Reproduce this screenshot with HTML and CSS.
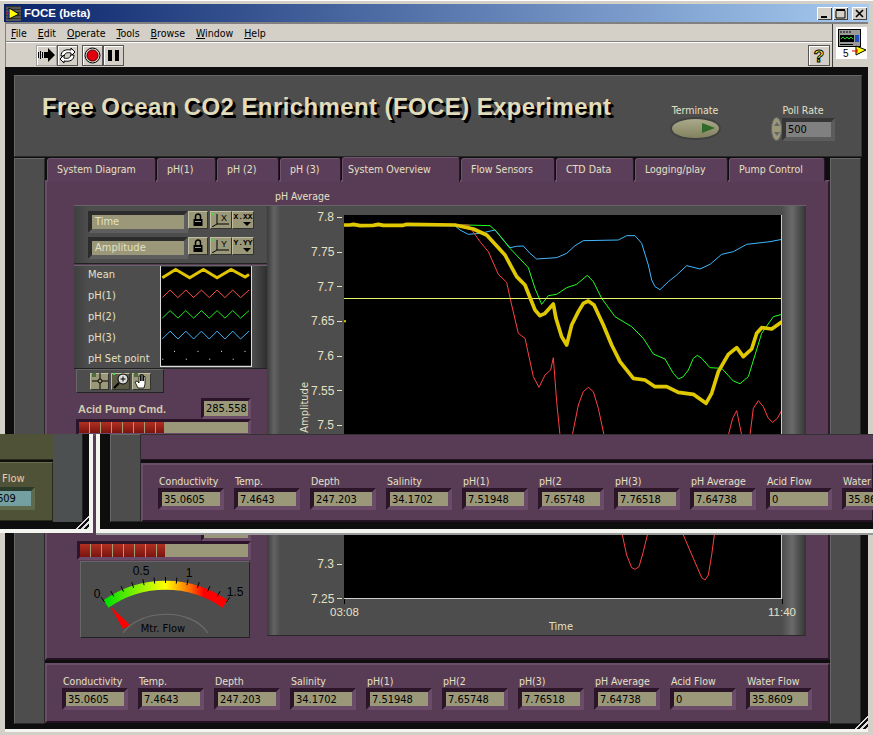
FILE: index.html
```html
<!DOCTYPE html>
<html lang="en">
<head>
  <meta charset="UTF-8">
  <title>FOCE (beta)</title>
  <link rel="stylesheet" href="styles.css">
</head>
<body>
  <div class="window">
    <div class="titlebar">
      <svg class="title-icon" width="15" height="15" viewBox="0 0 15 15">
        <rect width="15" height="15" fill="#333"/>
        <path d="M0 2h15M0 5h15M0 8h15M0 11h15M0 14h15" stroke="#777" stroke-width="1"/>
        <path d="M3 2 L13 8 L3 13 Z" fill="#ffff00" stroke="#000"/>
        <path d="M0 7h4" stroke="#e00000"/>
        <path d="M2 3v9" stroke="#2040e0"/>
      </svg>
      <span class="title-text">FOCE (beta)</span>
      <div class="title-buttons">
        <div class="title-btn"><svg width="15" height="13"><rect x="4" y="9" width="6" height="2" fill="#000"/></svg></div>
        <div class="title-btn"><svg width="15" height="13"><path d="M3 3.5h9v7.5h-9zM3 2.5h9" fill="none" stroke="#000"/></svg></div>
        <div class="title-btn close"><svg width="15" height="13"><path d="M4 3l7 7M11 3l-7 7" stroke="#000" stroke-width="1.6"/></svg></div>
      </div>
    </div>

    <div class="chrome">
      <div class="chrome-left">
        <nav class="menubar">
          <span><u>F</u>ile</span>
          <span><u>E</u>dit</span>
          <span><u>O</u>perate</span>
          <span><u>T</u>ools</span>
          <span><u>B</u>rowse</span>
          <span><u>W</u>indow</span>
          <span><u>H</u>elp</span>
        </nav>
        <div class="toolbar">
          <div class="tool-btn flat">
            <svg width="17" height="14" viewBox="0 0 17 14"><path d="M6 4h4V0l7 7-7 7v-4H6z" fill="#000"/><path d="M0.500 4v6M2.500 3v8M4.500 4v6" stroke="#000"/></svg>
          </div>
          <div class="tool-btn">
            <svg width="19" height="17" viewBox="0 0 19 17"><path d="M3 9C3 4 7 2 13 3V1l4 4-4 4V6C9 5 7 6 6 9z" fill="#fff" stroke="#000"/><path d="M16 8c0 5-4 7-10 6v2l-4-4 4-4v3c4 1 6 0 7-3z" fill="#fff" stroke="#000"/></svg>
          </div>
          <div class="tool-btn stop">
            <svg width="17" height="17" viewBox="0 0 17 17"><circle cx="8.5" cy="8.5" r="7.5" fill="#d8d4cc" stroke="#000"/><circle cx="8.5" cy="8.5" r="5.5" fill="#e00010" stroke="#400"/></svg>
          </div>
          <div class="tool-btn">
            <svg width="13" height="13" viewBox="0 0 13 13"><path d="M1 1h4v11H1zM8 1h4v11H8z" fill="#000"/></svg>
          </div>
          <div class="tool-btn help">
            <svg width="18" height="19" viewBox="0 0 18 19"><text x="9" y="16" text-anchor="middle" class="help-mark">?</text></svg>
          </div>
        </div>
      </div>
      <div class="vi-icon">
        <svg width="31" height="32" viewBox="0 0 31 32">
          <rect width="31" height="32" fill="#fff"/>
          <rect x="2.500" y="2.500" width="22" height="17" fill="#9a9a9a" stroke="#000"/>
          <rect x="4" y="8" width="14" height="7" fill="#000"/>
          <path d="M5 12l2-2 2 2 2-2 2 2 2-2 2 2" stroke="#20e020" fill="none"/>
          <path d="M4 5h2M7 5h2M10 5h2M13 5h2M4 17.500h13" stroke="#000"/>
          <rect x="19" y="8" width="4" height="7" fill="#2050c0"/>
          <path d="M20 19L30 23L20 28Z" fill="#ffff00" stroke="#000"/>
          <path d="M16 24h5M21 22v4" stroke="#e00000"/>
          <text x="7" y="30" class="vi-number">5</text>
        </svg>
      </div>
    </div>

    <div class="body">
      <header class="top-panel">
        <h1>Free Ocean CO2 Enrichment (FOCE) Experiment</h1>
        <div class="terminate">
          <span>Terminate</span>
          <div class="oval"><i></i></div>
        </div>
        <div class="poll">
          <span>Poll Rate</span>
          <div class="poll-row">
            <div class="spinner"></div>
            <div class="poll-value">500</div>
          </div>
        </div>
      </header>

      <div class="main-row">
        <div class="side-pane"></div>
        <div class="center">
          <div class="tabs">
            <div class="tab">System Diagram</div>
            <div class="tab">pH(1)</div>
            <div class="tab">pH (2)</div>
            <div class="tab">pH (3)</div>
            <div class="tab active">System Overview</div>
            <div class="tab">Flow Sensors</div>
            <div class="tab">CTD Data</div>
            <div class="tab">Logging/play</div>
            <div class="tab">Pump Control</div>
          </div>

          <section class="tab-panel">
            <div class="left-col">
              <div class="scale-legend">
                <div class="scale-row">
                  <div class="scale-name">Time</div>
                  <div class="mini-btn"><svg width="10" height="13" viewBox="0 0 10 13"><path d="M2.5 6V3.5a2.5 2.5 0 0 1 5 0V6" fill="none" stroke="#000" stroke-width="1.5"/><rect x="0.5" y="6" width="9" height="7" fill="#000"/><rect x="2" y="8" width="6" height="1" fill="#999"/></svg></div>
                  <div class="mini-btn wide"><svg width="18" height="14" viewBox="0 0 18 14"><path d="M5 1v10H17M5 11L0 14" stroke="#000" fill="none"/><text x="9" y="8" class="axis-letter">X</text><rect x="0" y="0" width="2" height="2" fill="#40e040"/></svg></div>
                  <div class="mini-btn wide fmt">X.XX</div>
                </div>
                <div class="scale-row">
                  <div class="scale-name">Amplitude</div>
                  <div class="mini-btn"><svg width="10" height="13" viewBox="0 0 10 13"><path d="M2.5 6V3.5a2.5 2.5 0 0 1 5 0V6" fill="none" stroke="#000" stroke-width="1.5"/><rect x="0.5" y="6" width="9" height="7" fill="#000"/><rect x="2" y="8" width="6" height="1" fill="#999"/></svg></div>
                  <div class="mini-btn wide"><svg width="18" height="14" viewBox="0 0 18 14"><path d="M5 1v10H17M5 11L0 14" stroke="#000" fill="none"/><text x="9" y="8" class="axis-letter">Y</text><rect x="0" y="0" width="2" height="2" fill="#40e040"/></svg></div>
                  <div class="mini-btn wide fmt">Y.YY</div>
                </div>
              </div>

              <div class="plot-legend">
                <ul class="plot-names">
                  <li>Mean</li>
                  <li>pH(1)</li>
                  <li>pH(2)</li>
                  <li>pH(3)</li>
                  <li>pH Set point</li>
                </ul>
                <svg class="plot-swatch" width="92" height="101" viewBox="0 0 276 303">
                  <rect width="276" height="303" fill="#000"/>
                  <path d="M4 34L45 9 88 34 130 9 172 34 215 9 258 32 270 24" fill="none" stroke="#e0c400" stroke-width="9"/>
                  <path d="M4 95L28 72 52 95 76 72 100 95 124 72 148 95 172 72 196 95 220 72 244 95 270 72" fill="none" stroke="#ff5050" stroke-width="3"/>
                  <path d="M4 158L28 135 52 158 76 135 100 158 124 135 148 158 172 135 196 158 220 135 244 158 270 135" fill="none" stroke="#20f020" stroke-width="3"/>
                  <path d="M4 222L28 198 52 222 76 198 100 222 124 198 148 222 172 198 196 222 220 198 244 222 270 198" fill="none" stroke="#40b8ff" stroke-width="3"/>
                  <path d="M40 260h3M112 260h3M184 260h3M256 260h3M4 284h3M76 284h3M148 284h3M220 284h3" stroke="#fff" stroke-width="3"/>
                </svg>
              </div>

              <div class="palette">
                <div class="mini-btn tool"><svg width="16" height="16" viewBox="0 0 16 16"><rect width="4" height="4" fill="#4f6f3f"/><path d="M8 0v6M8 10v6M0 8h6M10 8h6" stroke="#000"/><circle cx="8" cy="8" r="2" fill="none" stroke="#000"/></svg></div>
                <div class="mini-btn tool dark"><svg width="16" height="16" viewBox="0 0 16 16"><rect width="2" height="2" fill="#40e040"/><circle cx="10" cy="6" r="5" fill="#ddd" stroke="#000"/><path d="M7.5 6h5M10 3.5v5" stroke="#000"/><path d="M6 10L1 15" stroke="#000" stroke-width="2"/></svg></div>
                <div class="mini-btn tool"><svg width="16" height="16" viewBox="0 0 16 16"><rect width="4" height="4" fill="#4f6f3f"/><path d="M4 15L1 9l2-1 2 2V3h1.5v5V1.500h1.500v6.500V2h1.500v6V3.500h1.500V11l-1 4z" fill="#fff" stroke="#000" stroke-width="0.8"/></svg></div>
              </div>

              <div class="acid-head">
                <span class="acid-label">Acid Pump Cmd.</span>
                <div class="acid-value">285.558</div>
              </div>
              <div class="slider"><div class="slider-fill"></div></div>

              <div class="acid-head repeat"><div class="acid-value"></div></div>
              <div class="slider lower"><div class="slider-fill"></div></div>

              <div class="gauge">
                <svg width="170" height="77" viewBox="0 0 170 77">
                  <defs>
                    <linearGradient id="gaugeGrad" x1="0" x2="1" y1="0" y2="0">
                      <stop offset="0" stop-color="#00e000"/>
                      <stop offset="0.25" stop-color="#80f000"/>
                      <stop offset="0.5" stop-color="#ffff00"/>
                      <stop offset="0.72" stop-color="#ff6000"/>
                      <stop offset="0.82" stop-color="#ff0000"/>
                      <stop offset="1" stop-color="#ff0000"/>
                    </linearGradient>
                  </defs>
                  <path d="M26 43A104 104 0 0 1 145 43" fill="none" stroke="url(#gaugeGrad)" stroke-width="9"/>
                  <path class="gauge-ticks" d="M24.700 41.200L21.300 36.300M33.800 35.400L30.900 30.200M43.500 30.700L41.100 25.200M53.600 26.900L51.800 21.200M64.100 24.200L62.900 18.300M74.700 22.600L74.100 16.600M85.500 22V16M96.300 22.600L96.900 16.600M106.900 24.200L108.100 18.300M117.400 26.900L119.200 21.200M127.500 30.700L129.900 25.200M137.200 35.400L140.100 30.200M146.300 41.200L149.700 36.300"/>
                  <path d="M30 45L50 64 43 68Z" fill="#ff0000"/>
                  <path d="M43 72C60 48 110 46 128 72" fill="none" stroke="#6c6c6c" stroke-width="1.200"/>
                  <text x="17" y="37" class="gauge-num">0</text>
                  <text x="61" y="14" class="gauge-num">0.5</text>
                  <text x="109" y="16" class="gauge-num">1</text>
                  <text x="155" y="35" class="gauge-num">1.5</text>
                  <text x="83" y="71" class="gauge-name">Mtr. Flow</text>
                </svg>
              </div>
            </div>

            <div class="right-col">
              <div class="chart-title">pH Average</div>
              <div class="chart">
                <div class="chart-row">
                  <div class="axis-title"><span>Amplitude</span></div>
                  <div class="y-scale">
                    <div>7.8</div><div>7.75</div><div>7.7</div><div>7.65</div>
                    <div>7.6</div><div>7.55</div><div>7.5</div><div>7.45</div>
                    <div>7.4</div><div>7.35</div><div>7.3</div><div>7.25</div>
                  </div>
                  <div class="plot">
                    <svg width="438" height="384" viewBox="12 30 1314 1152">
                      <path class="trace" stroke="#40b8ff" d="M12 62L345 62 360 75 385 88 420 85 465 75 490 105 510 128 530 124 550 123 570 145 590 162 650 158 680 145 705 122 730 107 835 105 860 92 885 92 905 115 925 180 935 225 945 245 960 254 985 230 1010 210 1040 182 1080 192 1110 178 1145 148 1180 140 1220 118 1290 110 1326 103"/>
                      <path class="trace" stroke="#20ff20" d="M12 60L380 60 450 62 470 80 510 130 565 188 585 250 605 298 625 272 650 268 680 248 710 238 742 211 760 230 785 280 825 335 875 365 910 400 940 447 975 462 1000 505 1015 522 1030 515 1045 495 1060 460 1072 451 1085 460 1110 488 1145 490 1180 528 1200 536 1225 515 1245 450 1265 385 1300 335 1326 328"/>
                      <path class="trace" stroke="#ff4040" d="M12 60L385 60 420 110 445 140 475 208 500 232 515 300 535 385 555 400 580 515 597 547 615 510 632 495 640 458 650 590 660 690 670 780 685 780 697 690 715 600 730 560 745 547 760 560 775 610 792 690 847 990 860 1050 875 1088 885 1093 897 1085 910 1040 922 990 975 800 1030 990 1060 1060 1085 1118 1095 1125 1105 1110 1115 1050 1123 990 1165 690 1178 640 1190 617 1205 690 1218 740 1230 690 1240 610 1255 587 1270 605 1285 640 1298 652 1312 640 1326 615"/>
                      <path class="setpoint" d="M12 280.500H1326"/>
                      <path class="trace mean" d="M12 60L30 60 40 58 60 62 100 61 115 58 130 61 190 61 200 58 345 60 400 72 440 90 495 150 530 215 555 240 585 315 600 332 615 325 640 297 648 340 665 395 680 420 695 360 715 320 730 295 745 288 762 300 790 360 815 420 840 470 880 520 915 525 945 545 980 545 1015 562 1060 568 1098 595 1115 565 1135 500 1165 448 1190 428 1210 455 1235 432 1250 385 1265 368 1295 372 1326 350"/>
                      <path class="marker" d="M12 348.500h6"/>
                    </svg>
                  </div>
                </div>
                <div class="x-scale"><span>03:08</span><span>11:40</span></div>
                <div class="x-title">Time</div>
              </div>
            </div>
          </section>

          <section class="readouts">
            <div class="readout"><label>Conductivity</label><div class="readout-value">35.0605</div></div>
            <div class="readout"><label>Temp.</label><div class="readout-value">7.4643</div></div>
            <div class="readout"><label>Depth</label><div class="readout-value">247.203</div></div>
            <div class="readout"><label>Salinity</label><div class="readout-value">34.1702</div></div>
            <div class="readout"><label>pH(1)</label><div class="readout-value">7.51948</div></div>
            <div class="readout"><label>pH(2</label><div class="readout-value">7.65748</div></div>
            <div class="readout"><label>pH(3)</label><div class="readout-value">7.76518</div></div>
            <div class="readout"><label>pH Average</label><div class="readout-value">7.64738</div></div>
            <div class="readout"><label>Acid Flow</label><div class="readout-value">0</div></div>
            <div class="readout"><label>Water Flow</label><div class="readout-value">35.8609</div></div>
          </section>
        </div>
        <div class="side-pane"></div>
      </div>
      <div class="grip"></div>
    </div>
  </div>

  <!-- second and third window lying over the first one -->
  <div class="overlap">
    <div class="back-window">
      <div class="back-main">
        <div class="back-top"></div>
        <div class="back-strip">
          <span class="back-label">Flow</span>
          <div class="back-value">609</div>
        </div>
      </div>
      <div class="back-side"></div>
      <div class="grip small"></div>
    </div>
    <div class="front-window">
      <div class="side-pane front-side"></div>
      <div class="front-main">
        <div class="front-top"></div>
        <section class="readouts front-readouts">
          <div class="readout"><label>Conductivity</label><div class="readout-value">35.0605</div></div>
          <div class="readout"><label>Temp.</label><div class="readout-value">7.4643</div></div>
          <div class="readout"><label>Depth</label><div class="readout-value">247.203</div></div>
          <div class="readout"><label>Salinity</label><div class="readout-value">34.1702</div></div>
          <div class="readout"><label>pH(1)</label><div class="readout-value">7.51948</div></div>
          <div class="readout"><label>pH(2</label><div class="readout-value">7.65748</div></div>
          <div class="readout"><label>pH(3)</label><div class="readout-value">7.76518</div></div>
          <div class="readout"><label>pH Average</label><div class="readout-value">7.64738</div></div>
          <div class="readout"><label>Acid Flow</label><div class="readout-value">0</div></div>
          <div class="readout"><label>Water Flow</label><div class="readout-value">35.8609</div></div>
        </section>
      </div>
    </div>
  </div>
</body>
</html>
```

FILE: styles.css
```css
* {
  box-sizing: border-box;
}
body {
  margin: 0;
  width: 873px;
  height: 735px;
  overflow: hidden;
  position: relative;
  background: #d4d0c8;
  font-family: "DejaVu Sans Condensed", "DejaVu Sans", sans-serif;
  font-stretch: condensed;
  font-size: 10.500px;
  color: #e4e0c4;
}
.window {
  padding: 4px 4px 0 4px;
  height: 735px;
  border-top: 1px solid #fff;
  display: flex;
  flex-direction: column;
}
.titlebar {
  height: 18px;
  margin-top: -1px;
  display: flex;
  align-items: center;
  padding: 0 2px 0 2px;
  background: linear-gradient(to right, #0a246a, #a6caf0);
  flex: none;
}
.title-icon {
  margin-right: 3px;
}
.title-text {
  color: #fff;
  font-family: "Liberation Sans", sans-serif;
  font-weight: bold;
  font-size: 11.500px;
}
.title-buttons {
  margin-left: auto;
  display: flex;
  gap: 1px;
}
.title-btn {
  width: 15px;
  height: 13px;
  background: #d4d0c8;
  box-shadow: inset 1px 1px 0 #fff, inset -1px -1px 0 #404040;
}
.title-btn svg {
  display: block;
}
.title-btn.close {
  margin-left: 3px;
}
.chrome {
  height: 45px;
  margin-left: 1px;
  margin-right: 1px;
  display: flex;
  flex: none;
  background: #d4d0c8;
  border-top: 2px solid #808080;
  border-left: 1px solid #808080;
}
.chrome-left {
  flex: 1;
  display: flex;
  flex-direction: column;
}
.menubar {
  height: 18px;
  display: flex;
  align-items: center;
  gap: 11px;
  padding-left: 5px;
  color: #000;
  border-bottom: 1px solid #808080;
}
.toolbar {
  flex: 1;
  border-top: 1px solid #fff;
  display: flex;
  align-items: center;
  padding-left: 30px;
  gap: 0;
}
.tool-btn {
  width: 21px;
  height: 21px;
  display: flex;
  align-items: center;
  justify-content: center;
  background: #d4d0c8;
  border: 1px solid #555;
  box-shadow: inset 1px 1px 0 #fff;
}
.tool-btn.flat {
  border-color: #a0a0a0;
}
.tool-btn.stop {
  margin-left: 4px;
}
.tool-btn.help {
  margin-left: auto;
  margin-right: 2px;
  width: 22px;
}
.help-mark {
  font-size: 17px;
  font-weight: bold;
  font-family: "Liberation Sans", sans-serif;
  fill: #ffff40;
  stroke: #000;
  stroke-width: 1;
}
.vi-icon {
  width: 36px;
  border-left: 1px solid #404040;
  padding: 3px 0 0 3px;
}
.vi-icon svg {
  display: block;
}
.vi-number {
  font-size: 10px;
  font-family: "Liberation Sans", sans-serif;
  fill: #000;
}
.body {
  flex: 1;
  position: relative;
  margin-left: 1px;
  margin-right: 1px;
  margin-bottom: 3px;
  padding: 8px 6px 0 9px;
  background: #0e0e0e;
  border-bottom: 3px solid #f4f4f0;
}
.top-panel {
  height: 82px;
  display: flex;
  align-items: flex-start;
  padding: 17px 0 0 27px;
  background: #4d4d4d;
  border: 1px solid;
  border-color: #666 #333 #2a2a2a #666;
}
.top-panel h1 {
  margin: 0;
  width: 613px;
  flex: none;
  font-family: "Liberation Sans", sans-serif;
  font-stretch: normal;
  font-size: 24px;
  line-height: 28px;
  letter-spacing: 0.400px;
  white-space: nowrap;
  font-weight: bold;
  color: #e0dcbc;
  text-shadow: 2px 2px 0 #000, 3px 3px 0 #000;
}
.terminate {
  width: 80px;
  flex: none;
  display: flex;
  flex-direction: column;
  align-items: center;
  margin-top: 11px;
}
.oval {
  margin-top: 3px;
  width: 47px;
  height: 19px;
  border-radius: 50%;
  background: linear-gradient(#aaa98a, #82825f);
  box-shadow: 0 0 0 2px #414141;
  position: relative;
}
.oval i {
  position: absolute;
  left: 30px;
  top: 4px;
  border-left: 13px solid #306a28;
  border-top: 5px solid transparent;
  border-bottom: 5px solid transparent;
}
.poll {
  margin-left: 36px;
  width: 64px;
  flex: none;
  display: flex;
  flex-direction: column;
  align-items: center;
  margin-top: 11px;
}
.poll-row {
  display: flex;
  align-items: center;
  margin-top: 1px;
}
.spinner {
  width: 11px;
  height: 24px;
  border-radius: 50%;
  background: #9a9878;
  border: 1px solid #666;
  position: relative;
}
.spinner::before {
  content: "";
  position: absolute;
  left: 2px;
  top: 4px;
  border-left: 3px solid transparent;
  border-right: 3px solid transparent;
  border-bottom: 4px solid #666;
}
.spinner::after {
  content: "";
  position: absolute;
  left: 2px;
  bottom: 4px;
  border-left: 3px solid transparent;
  border-right: 3px solid transparent;
  border-top: 4px solid #666;
}
.poll-value {
  width: 53px;
  height: 23px;
  padding-left: 2px;
  line-height: 15px;
  font-size: 11px;
  color: #000;
  background: #808080;
  border: 4px solid;
  border-color: #363636 #5c5c5c #5c5c5c #363636;
}
.main-row {
  display: flex;
  height: 566px;
  margin-top: 1px;
}
.side-pane {
  width: 31px;
  background: #4d4d4d;
  border: 1px solid;
  border-color: #666 #2a2a2a #2a2a2a #666;
  flex: none;
}
.center {
  width: 785px;
  flex: none;
}
.tabs {
  height: 22px;
  padding-left: 2px;
  display: grid;
  grid-template-columns: 110px 60px 63px 62px 119px 95px 79px 94px 97px;
}
.tab {
  margin-right: 1px;
  padding: 4px 0 0 9px;
  line-height: 13px;
  background: #5b3e59;
  border: 1px solid;
  border-color: #6f546c #2a1628 transparent #6f546c;
  border-radius: 3px 3px 0 0;
  white-space: nowrap;
}
.tab.active {
  height: 25px;
  margin-top: -1px;
  padding-left: 5px;
  padding-top: 5px;
  background: #583b55;
  border-bottom: none;
  position: relative;
  z-index: 1;
}
.tab-panel {
  height: 480px;
  display: flex;
  padding: 7px 0 0 27px;
  background: #583b55;
  border: 2px solid;
  border-color: #6a4e67 #2f1a2d #241223 #6a4e67;
}
.left-col {
  width: 193px;
  margin-top: 16px;
  flex: none;
}
.scale-legend {
  height: 59px;
  background: linear-gradient(to right, #3f3f3f, #4d4d4d 14px);
  border-top: 1px solid #666;
  border-bottom: 1px solid #222;
  padding: 3px 0 0 14px;
}
.scale-row {
  display: flex;
  align-items: center;
  height: 26px;
}
.scale-name {
  width: 100px;
  height: 22px;
  padding: 0 0 0 3px;
  line-height: 14px;
  background: #9a9878;
  border: 4px solid;
  border-color: #2c2c2c #5e5e5e #5e5e5e #2c2c2c;
  font-size: 11px;
}
.mini-btn {
  width: 20px;
  height: 18px;
  display: flex;
  align-items: center;
  justify-content: center;
  background: #9a9878;
  border: 1px solid;
  border-color: #c0bea0 #333 #333 #c0bea0;
}
.scale-row .mini-btn {
  margin-top: -5px;
}
.mini-btn.wide {
  width: 22px;
}
.mini-btn.wide:nth-child(3) {
  margin-left: 2px;
}
.fmt {
  font-family: "Liberation Mono", monospace;
  font-stretch: normal;
  font-size: 8px;
  font-weight: bold;
  color: #000;
  overflow: hidden;
  white-space: nowrap;
  align-items: flex-start;
  position: relative;
}
.fmt::after {
  content: "";
  position: absolute;
  right: 2px;
  bottom: 2px;
  border-left: 4px solid transparent;
  border-right: 4px solid transparent;
  border-top: 4px solid #000;
}
.axis-letter {
  font-size: 9px;
  font-family: "Liberation Sans", sans-serif;
  fill: #000;
}
.plot-legend {
  height: 104px;
  margin-top: 1px;
  display: flex;
  border-top: 1px solid #666;
  border-bottom: 1px solid #222;
  padding-left: 14px;
  background: linear-gradient(to right, #3f3f3f, #4d4d4d 14px, #4d4d4d 178px, #2f2f2f);
}
.plot-names {
  list-style: none;
  margin: 0;
  padding: 0;
  width: 72px;
  font-size: 11px;
}
.plot-names li {
  height: 21px;
  line-height: 17px;
}
.plot-swatch {
  display: block;
  border-left: 1px solid #ddd;
  border-right: 1px solid #ddd;
  border-bottom: 1px solid #ddd;
}
.palette {
  width: 88px;
  height: 24px;
  margin-left: 2px;
  display: flex;
  align-items: center;
  padding-left: 13px;
  gap: 2px;
  background: #4d4d4d;
  border: 1px solid;
  border-color: #666 #222 #222 #666;
}
.mini-btn.tool {
  width: 19px;
  height: 17px;
}
.mini-btn.tool.dark {
  background: #5c5c44;
}
.acid-head {
  display: flex;
  align-items: center;
  justify-content: space-between;
  margin-top: 5px;
  height: 21px;
  width: 177px;
  padding-left: 4px;
}
.acid-head.repeat {
  margin-top: 84px;
  justify-content: flex-end;
}
.acid-label {
  font-family: "Liberation Sans", sans-serif;
  font-stretch: normal;
  font-weight: bold;
  font-size: 11px;
  color: #cfcbb0;
}
.acid-value {
  width: 50px;
  height: 21px;
  padding-left: 2px;
  line-height: 15px;
  color: #000;
  font-size: 11px;
  background: #9a9878;
  border: 3px solid;
  border-color: #2c1429 #6a4c68 #6a4c68 #2c1429;
}
.slider {
  width: 175px;
  height: 17px;
  margin-left: 2px;
  background: #9a9878;
  border: 3px solid;
  border-color: #2c1429 #6a4c68 #6a4c68 #2c1429;
}
.slider.lower {
  margin-left: 3px;
  width: 174px;
  height: 19px;
}
.slider-fill {
  width: 85px;
  height: 100%;
  background:
    repeating-linear-gradient(to right, transparent 0, transparent 10px, #a89c78 10px, #a89c78 11px),
    linear-gradient(#b03020, #7a1410);
}
.gauge {
  width: 170px;
  height: 77px;
  margin: 1px 0 0 6px;
  background: #4d4d4d;
  border: 1px solid;
  border-color: #666 #222 #222 #666;
  overflow: hidden;
}
.gauge svg {
  display: block;
  margin: -1px 0 0 -1px;
}
.gauge-ticks {
  stroke: #000;
  fill: none;
}
.gauge-num {
  font-size: 12px;
  text-anchor: middle;
  font-family: "Liberation Sans", sans-serif;
  fill: #000;
}
.gauge-name {
  font-size: 11px;
  text-anchor: middle;
  fill: #000;
}
.right-col {
  flex: none;
  width: 539px;
}
.chart-title {
  height: 16px;
  line-height: 14px;
  padding-left: 8px;
}
.chart {
  height: 431px;
  padding: 9px 0 0 30px;
  background: linear-gradient(to right, #3c3c3c, #636363 7px, #4d4d4d 13px, #4d4d4d 515px, #6a6a6a 525px, #333 539px);
  border-top: 1px solid #666;
  border-bottom: 1px solid #2a2a2a;
}
.chart-row {
  display: flex;
  height: 384px;
}
.axis-title {
  width: 14px;
  display: flex;
  align-items: center;
  justify-content: center;
  font-size: 11px;
}
.axis-title span {
  writing-mode: vertical-rl;
  transform: rotate(180deg);
}
.y-scale {
  width: 33px;
  margin-top: -15px;
  font-family: "Liberation Sans", sans-serif;
  font-stretch: normal;
  font-size: 12px;
}
.y-scale div {
  height: 34.700px;
  display: flex;
  align-items: center;
  justify-content: flex-end;
  gap: 3px;
  padding-right: 2px;
}
.y-scale div::after {
  content: "";
  width: 5px;
  height: 1px;
  background: #e4e0c4;
}
.plot {
  width: 438px;
  height: 384px;
  background: #000;
  position: relative;
  overflow: hidden;
}
.plot svg {
  display: block;
}
.plot::after {
  content: "";
  position: absolute;
  inset: 0;
  border-right: 1px solid #ccc;
  border-bottom: 1px solid #ccc;
}
.trace {
  fill: none;
  stroke-width: 3;
  stroke-linejoin: round;
}
.trace.mean {
  stroke: #e0c800;
  stroke-width: 11;
}
.setpoint {
  stroke: #e8f468;
  stroke-width: 3;
}
.marker {
  stroke: #e0c800;
  stroke-width: 6;
}
.x-scale {
  width: 466px;
  margin: 6px 0 0 33px;
  display: flex;
  justify-content: space-between;
  line-height: 14px;
  font-family: "Liberation Sans", sans-serif;
  font-stretch: normal;
  font-size: 11.500px;
}
.x-scale span {
  position: relative;
}
.x-scale span::before {
  content: "";
  position: absolute;
  left: 14px;
  top: -6px;
  width: 1px;
  height: 5px;
  background: #000;
}
.x-title {
  width: 438px;
  margin: 1px 0 0 45px;
  text-align: center;
  line-height: 14px;
  font-size: 11px;
}
.readouts {
  height: 60px;
  margin-top: 3px;
  display: grid;
  grid-template-columns: repeat(10, 76px);
  padding: 9px 0 0 15px;
  background: #583b55;
  border: 2px solid;
  border-color: #6a4e67 #2f1a2d #241223 #6a4e67;
}
.readout label {
  display: block;
  height: 14px;
  line-height: 14px;
  white-space: nowrap;
  padding-left: 1px;
}
.readout-value {
  width: 66px;
  height: 22px;
  padding: 0 0 0 2px;
  line-height: 16px;
  color: #000;
  font-size: 11px;
  background: #9a9878;
  border: 4px solid;
  border-color: #2c1429 #6a4c68 #6a4c68 #2c1429;
}
.grip {
  position: absolute;
  right: 0;
  bottom: 0;
  width: 14px;
  height: 14px;
  background: repeating-linear-gradient(135deg, #0e0e0e 0, #0e0e0e 2px, #ddd 2px, #ddd 4px);
  clip-path: polygon(100% 0, 100% 100%, 0 100%);
}
.overlap {
  position: absolute;
  left: 0;
  top: 434px;
  width: 873px;
  height: 101px;
  display: flex;
  overflow: hidden;
}
.back-window {
  width: 93px;
  flex: none;
  height: 99px;
  position: relative;
  display: flex;
  padding-bottom: 7px;
  background: #0e0e0e;
  border-right: 4px solid #f4f4f0;
  border-bottom: 4px solid #f4f4f0;
}
.back-main {
  width: 53px;
  flex: none;
}
.back-top {
  height: 26px;
  background: #4f5236;
  border-bottom: 1px solid #2a2a18;
}
.back-strip {
  height: 59px;
  margin-top: 2px;
  padding-top: 9px;
  background: #4f5236;
  border-top: 1px solid #6a6c4c;
  border-right: 1px solid #2a2a18;
  border-bottom: 1px solid #2a2a18;
  color: #e8cdb0;
  position: relative;
}
.back-label {
  display: block;
  line-height: 14px;
  padding-left: 2px;
  font-size: 11px;
}
.back-value {
  position: absolute;
  left: -4px;
  top: 24px;
  width: 39px;
  height: 23px;
  line-height: 16px;
  text-indent: -3px;
  color: #000;
  font-size: 11px;
  background: #74a0a2;
  border: 4px solid;
  border-color: #2a3a2a #5f6a4a #5f6a4a #2a3a2a;
}
.back-side {
  width: 30px;
  background: #4d5050;
  border-right: 1px solid #222;
}
.front-window {
  flex: none;
  width: 780px;
  height: 99px;
  margin-left: 3px;
  display: flex;
  padding: 0 0 7px 10px;
  background: #0e0e0e;
  border-left: 4px solid #f4f4f0;
  border-bottom: 4px solid #f4f4f0;
  box-shadow: 0 2px 0 #999;
}
.front-side {
  height: 88px;
}
.front-main {
  flex: none;
  width: 733px;
}
.front-top {
  height: 26px;
  background: #583b55;
  border-top: 1px solid #333;
  border-bottom: 1px solid #241223;
}
.front-readouts {
  margin-top: 3px;
  height: 59px;
}
```
